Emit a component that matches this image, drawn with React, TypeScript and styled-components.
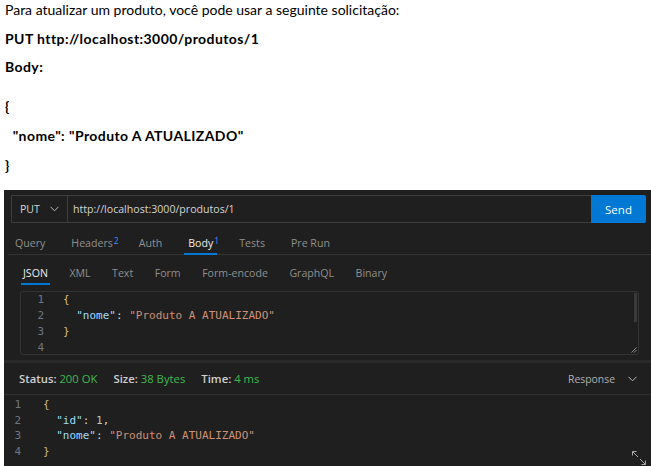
import { createGlobalStyle, styled } from 'styled-components';

const GlobalStyle = createGlobalStyle`
  html, body {
    margin: 0;
    padding: 0;
    background: #ffffff;
    overflow: hidden;
  }
  body {
    width: 651px;
    height: 466px;
  }
`;

const Page = styled.div`
  width: 651px;
  height: 466px;
  overflow: hidden;
`;

const Doc = styled.div`
  margin-top: -4px;
  padding-left: 5px;
  font-family: Lato, 'Liberation Sans', sans-serif;
  font-size: 14px;
  color: #000000;
`;

const DocLine = styled.div<{ $bold?: boolean; $lh?: number; $gap?: number }>`
  font-weight: ${(p) => (p.$bold ? 700 : 400)};
  letter-spacing: ${(p) => (p.$bold ? '0.42px' : '0')};
  line-height: ${(p) => p.$lh ?? 28.5}px;
  margin-top: ${(p) => p.$gap ?? 0}px;
  white-space: pre;
`;

const Panel = styled.div`
  margin: 10px 0 0 4px;
  height: 290px;
  background: #1f1f1f;
  font-family: 'Open Sans', 'Noto Sans', sans-serif;
  font-size: 10.6px;
  color: #cccccc;
  padding: 5px 5px 0 7px;
  box-sizing: border-box;
`;

const UrlBar = styled.div`
  display: flex;
  height: 28px;
`;

const UrlBox = styled.div`
  flex: 1;
  display: flex;
  align-items: center;
  border: 1px solid #3c3c3c;
  border-right: none;
  box-sizing: border-box;
`;

const Method = styled.div`
  width: 56px;
  height: 100%;
  box-sizing: border-box;
  border-right: 1px solid #3c3c3c;
  display: flex;
  align-items: center;
  justify-content: space-between;
  padding: 0 8px 0 8px;
  color: #d4d4d4;
`;

const Url = styled.div`
  padding-left: 5px;
  color: #d4d4d4;
`;

const SendButton = styled.button`
  width: 55px;
  height: 28px;
  border: none;
  border-radius: 0 2px 2px 0;
  background: #0078d4;
  color: #ffffff;
  font-family: inherit;
  font-size: 11.5px;
  padding: 0;
`;

const TabRow = styled.div`
  display: flex;
  gap: 26px;
  height: 32px;
  box-sizing: border-box;
  padding: 8px 0 0 7px;
  align-items: stretch;
  border-bottom: 1px solid #333333;
  margin: 0 -5px 0 -3px;
`;

const Tab = styled.div<{ $active?: boolean; $pad?: number; $bottom?: number }>`
  position: relative;
  display: flex;
  align-items: center;
  color: ${(p) => (p.$active ? '#ececec' : '#8f8f8f')};
  &::after {
    content: '';
    position: absolute;
    left: -${(p) => p.$pad ?? 4}px;
    right: -${(p) => p.$pad ?? 4}px;
    bottom: ${(p) => p.$bottom ?? -1}px;
    height: 2px;
    background: ${(p) => (p.$active ? '#0078d4' : 'transparent')};
  }
`;

const Sup = styled.span`
  position: absolute;
  left: calc(100% + 1px);
  top: 4px;
  font-size: 8.5px;
  color: #3794ff;
`;

const SubTabRow = styled.div`
  display: flex;
  gap: 21.5px;
  height: 30px;
  box-sizing: border-box;
  padding: 5px 0 0 12px;
`;

const Editor = styled.div`
  position: relative;
  margin: 6px 7px 0 9px;
  height: 64px;
  border: 1px solid #333333;
  border-radius: 3px;
  box-sizing: border-box;
`;

const CodeLine = styled.div<{ $lh: number; $num: number; $code: number }>`
  display: grid;
  grid-template-columns: ${(p) => p.$num}px ${(p) => p.$code}px 1fr;
  height: ${(p) => p.$lh}px;
  line-height: ${(p) => p.$lh}px;
  font-family: 'DejaVu Sans Mono', 'Liberation Mono', monospace;
  font-size: 11px;
  white-space: pre;
`;

const LineNum = styled.span`
  text-align: right;
  color: #6e7681;
`;

const Key = styled.span`
  color: #9cdcfe;
`;
const Str = styled.span`
  color: #ce9178;
`;
const Num = styled.span`
  color: #b5cea8;
`;
const Punct = styled.span`
  color: #d4d4d4;
`;
const Brace = styled.span<{ $c: string }>`
  color: ${(p) => p.$c};
`;

const ScrollThumb = styled.div`
  position: absolute;
  right: 1px;
  top: 1px;
  width: 3px;
  height: 29px;
  background: #3a3a3a;
`;

const Grip = styled.svg`
  position: absolute;
  right: 1px;
  bottom: 1px;
`;

const Divider = styled.div`
  height: 3px;
  margin: 5px -5px 0 -7px;
  background: #2a2a2a;
`;

const StatusRow = styled.div`
  display: flex;
  align-items: center;
  height: 32px;
  box-sizing: border-box;
  padding: 0 14px 0 15px;
  margin: 0 -5px 0 -7px;
  border-bottom: 1px solid #303030;
  gap: 16px;
  font-size: 11.3px;
`;

const Stat = styled.span`
  color: #d0d0d0;
  font-weight: 600;
`;

const StatValue = styled.span`
  color: #3fb94f;
  font-weight: 400;
`;

const ResponseSelect = styled.div`
  margin-left: auto;
  display: flex;
  align-items: center;
  gap: 13px;
  color: #b0b0b0;
  font-size: 10.4px;
`;

const ResponseBody = styled.div`
  position: relative;
  margin: 1px -5px 0 -7px;
  padding-top: 1px;
`;

const Expand = styled.svg`
  position: absolute;
  right: 4px;
  top: 54px;
`;

const Chevron = ({ color }: { color: string }) => (
  <svg width="9" height="6" viewBox="0 0 9 6">
    <path d="M0.5 0.8 L4.5 4.8 L8.5 0.8" fill="none" stroke={color} strokeWidth="1" />
  </svg>
);

export default function App() {
  const tabs = [
    { name: 'Query' },
    { name: 'Headers', sup: '2' },
    { name: 'Auth' },
    { name: 'Body', sup: '1', active: true },
    { name: 'Tests' },
    { name: 'Pre Run' },
  ];
  const subTabs = ['JSON', 'XML', 'Text', 'Form', 'Form-encode', 'GraphQL', 'Binary'];

  return (
    <>
      <GlobalStyle />
      <Page>
        <Doc>
          <DocLine>Para atualizar um produto, você pode usar a seguinte solicitação:</DocLine>
          <DocLine $bold>PUT http://localhost:3000/produtos/1</DocLine>
          <DocLine $bold>Body:</DocLine>
          <DocLine $bold $gap={11}>{'{'}</DocLine>
          <DocLine $bold $lh={29.5}>{'  "nome": "Produto A ATUALIZADO"'}</DocLine>
          <DocLine $bold $lh={29.5}>{'}'}</DocLine>
        </Doc>

        <Panel>
          <UrlBar>
            <UrlBox>
              <Method>
                <span>PUT</span>
                <Chevron color="#bdbdbd" />
              </Method>
              <Url>http://localhost:3000/produtos/1</Url>
            </UrlBox>
            <SendButton>Send</SendButton>
          </UrlBar>

          <TabRow>
            {tabs.map((t) => (
              <Tab key={t.name} $active={t.active}>
                {t.name}
                {t.sup && <Sup>{t.sup}</Sup>}
              </Tab>
            ))}
          </TabRow>

          <SubTabRow>
            {subTabs.map((s, i) => (
              <Tab key={s} $active={i === 0} $pad={2} $bottom={0}>
                {s}
              </Tab>
            ))}
          </SubTabRow>

          <Editor>
            <CodeLine $lh={16} $num={23} $code={19}>
              <LineNum>1</LineNum>
              <span />
              <Brace $c="#d7ba7d">{'{'}</Brace>
            </CodeLine>
            <CodeLine $lh={16} $num={23} $code={19}>
              <LineNum>2</LineNum>
              <span />
              <span>
                {'  '}
                <Key>"nome"</Key>
                <Punct>: </Punct>
                <Str>"Produto A ATUALIZADO"</Str>
              </span>
            </CodeLine>
            <CodeLine $lh={16} $num={23} $code={19}>
              <LineNum>3</LineNum>
              <span />
              <Brace $c="#d7ba7d">{'}'}</Brace>
            </CodeLine>
            <CodeLine $lh={16} $num={23} $code={19}>
              <LineNum>4</LineNum>
              <span />
              <span />
            </CodeLine>
            <ScrollThumb />
            <Grip width="6" height="6" viewBox="0 0 6 6">
              <path d="M5.5 0.5 L0.5 5.5 M5.5 3 L3 5.5" stroke="#8a8a8a" strokeWidth="1" />
            </Grip>
          </Editor>

          <Divider />

          <StatusRow>
            <Stat>
              Status: <StatValue>200 OK</StatValue>
            </Stat>
            <Stat>
              Size: <StatValue>38 Bytes</StatValue>
            </Stat>
            <Stat>
              Time: <StatValue>4 ms</StatValue>
            </Stat>
            <ResponseSelect>
              <span>Response</span>
              <Chevron color="#bdbdbd" />
            </ResponseSelect>
          </StatusRow>

          <ResponseBody>
            <CodeLine $lh={15.7} $num={17} $code={22}>
              <LineNum>1</LineNum>
              <span />
              <Brace $c="#c9b97a">{'{'}</Brace>
            </CodeLine>
            <CodeLine $lh={15.7} $num={17} $code={22}>
              <LineNum>2</LineNum>
              <span />
              <span>
                {'  '}
                <Key>"id"</Key>
                <Punct>: </Punct>
                <Num>1</Num>
                <Punct>,</Punct>
              </span>
            </CodeLine>
            <CodeLine $lh={15.7} $num={17} $code={22}>
              <LineNum>3</LineNum>
              <span />
              <span>
                {'  '}
                <Key>"nome"</Key>
                <Punct>: </Punct>
                <Str>"Produto A ATUALIZADO"</Str>
              </span>
            </CodeLine>
            <CodeLine $lh={15.7} $num={17} $code={22}>
              <LineNum>4</LineNum>
              <span />
              <Brace $c="#c9b97a">{'}'}</Brace>
            </CodeLine>
            <Expand width="16" height="16" viewBox="0 0 16 16">
              <path
                d="M1.5 1.5 L7 7 M1.5 1.5 L1.5 5.5 M1.5 1.5 L5.5 1.5 M9 9 L14.5 14.5 M14.5 14.5 L14.5 10.5 M14.5 14.5 L10.5 14.5"
                fill="none"
                stroke="#a8a8a8"
                strokeWidth="1"
              />
            </Expand>
          </ResponseBody>
        </Panel>
      </Page>
    </>
  );
}
